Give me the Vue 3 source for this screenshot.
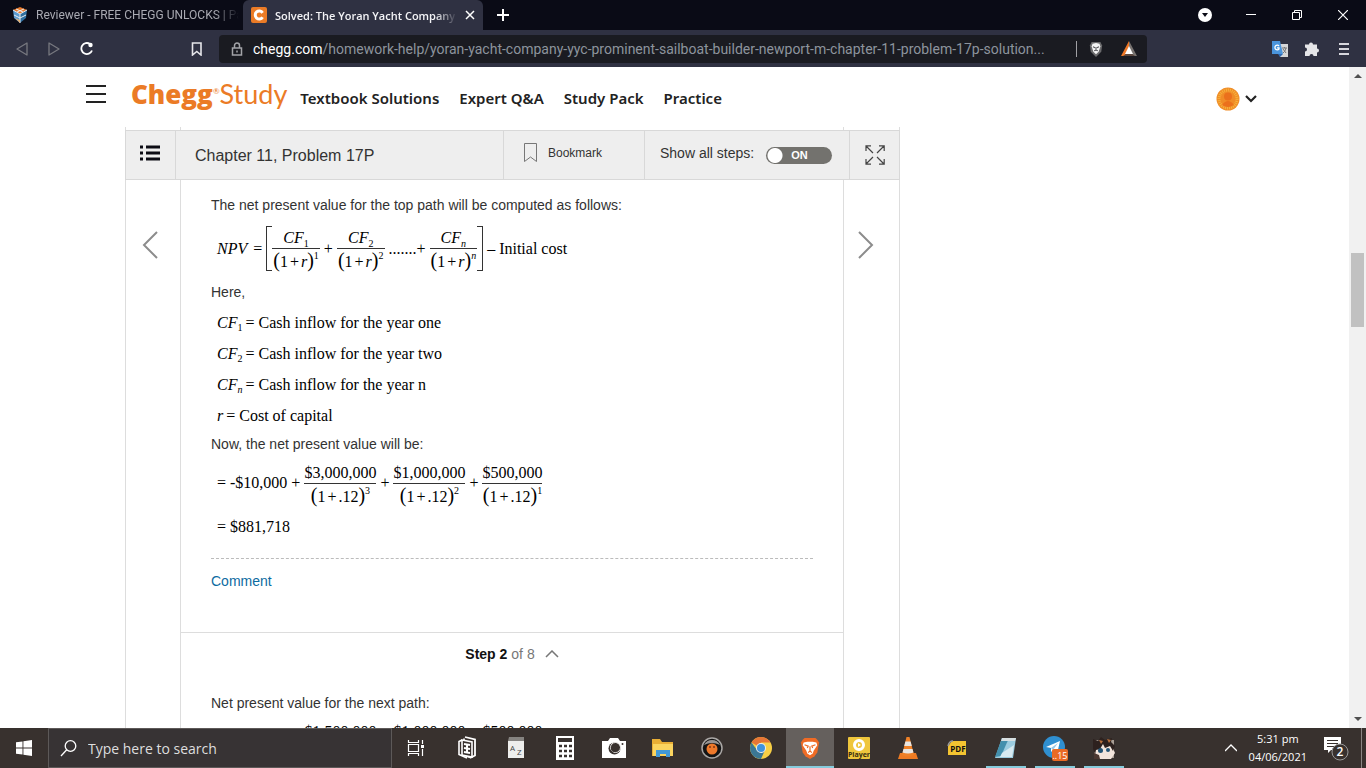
<template>
  <div class="screen">
    <header class="tabbar">
      <button class="tab">
        <svg class="tab-icon" width="16" height="16" viewBox="0 0 16 16">
          <path d="M8 0l7 3-7 4-7-4z" fill="#e8792b" />
          <path d="M1 3l7 4v9l-6-5z" fill="#5b9bd0" />
          <path d="M15 3L8 7v9l6-5z" fill="#2f6f9f" />
          <path d="M1 3l7 4 7-4M8 7v9M2 8l6 3 6-3M4 2l7 3M12 2L5 5" stroke="#e9eef2" fill="none" />
          <path d="M3 11l5 2v3z" fill="#e5b070" />
        </svg>
        <span class="tab-title">Reviewer - FREE CHEGG UNLOCKS | Pa</span>
      </button>
      <div class="tab active">
        <svg class="tab-icon" width="16" height="16" viewBox="0 0 16 16">
          <rect width="16" height="16" rx="2" fill="#eb7b26" />
          <path d="M11.600 5.800A4 4 0 1 0 11.600 10.200" stroke="#fff" stroke-width="3" fill="none" />
        </svg>
        <span class="tab-title">Solved: The Yoran Yacht Company</span>
        <button class="icon-btn" aria-label="Close tab">
          <svg width="10" height="10" viewBox="0 0 10 10"><path d="M1 1l8 8M9 1L1 9" stroke="#fff" stroke-width="1.500" /></svg>
        </button>
      </div>
      <button class="icon-btn new-tab" aria-label="New tab">
        <svg width="12" height="12" viewBox="0 0 12 12"><path d="M6 0v12M0 6h12" stroke="#fff" stroke-width="2" /></svg>
      </button>
      <div class="window-buttons">
        <button class="icon-btn" aria-label="Search tabs">
          <svg width="14" height="14" viewBox="0 0 14 14"><circle cx="7" cy="7" r="7" fill="#fff" /><path d="M4 5h6l-3 4z" fill="#0b0c17" /></svg>
        </button>
        <button class="icon-btn" aria-label="Minimize">
          <svg width="10" height="10" viewBox="0 0 10 10"><path d="M0 4.500h10" stroke="#fff" /></svg>
        </button>
        <button class="icon-btn" aria-label="Restore">
          <svg width="10" height="10" viewBox="0 0 10 10"><path d="M.5 2.500h7v7h-7zM2.500 2.500v-2h7v7h-2" stroke="#fff" fill="none" /></svg>
        </button>
        <button class="icon-btn" aria-label="Close">
          <svg width="10" height="10" viewBox="0 0 10 10"><path d="M0 0l10 10M10 0L0 10" stroke="#fff" stroke-width="1.200" /></svg>
        </button>
      </div>
    </header>

    <div class="toolbar">
      <div class="history">
        <button class="icon-btn" aria-label="Back">
          <svg width="12" height="14" viewBox="0 0 12 14"><path d="M11 1v12L1 7z" stroke="#77787f" stroke-width="1.300" fill="none" stroke-linejoin="round" /></svg>
        </button>
        <button class="icon-btn" aria-label="Forward">
          <svg width="12" height="14" viewBox="0 0 12 14"><path d="M1 1v12l10-6z" stroke="#77787f" stroke-width="1.300" fill="none" stroke-linejoin="round" /></svg>
        </button>
        <button class="icon-btn" aria-label="Reload">
          <svg width="16" height="16" viewBox="0 0 16 16"><path d="M10 3A5.500 5.500 0 1 0 12 9.500" stroke="#fff" stroke-width="1.800" fill="none" /><circle cx="10.500" cy="4" r="2.200" fill="#fff" /></svg>
        </button>
      </div>
      <button class="icon-btn" aria-label="Bookmark this page">
        <svg width="12" height="14" viewBox="0 0 12 14"><path d="M1.500 1h8.500v12L5.800 9.500 1.500 13z" stroke="#e6e6ea" stroke-width="1.600" fill="none" /></svg>
      </button>
      <div class="address">
        <svg width="12" height="14" viewBox="0 0 12 14"><path d="M1.500 6h9v7h-9zM3.500 6V3.500a2.500 2.500 0 0 1 5 0V6M6 8.500v2" stroke="#a3a4a8" stroke-width="1.500" fill="none" /></svg>
        <label for="url">chegg.com</label>
        <input id="url" v-model="url" />
        <span class="divider"></span>
        <button class="icon-btn shield" aria-label="Shields">
          <svg width="14" height="18" viewBox="0 0 16 18"><path d="M3 1h10l2 4-1 7-6 6-6-6-1-7z" fill="#6a6a6c" /><path d="M4 3l4-1 4 1 1 3-2 6-3 3-3-3-2-6z" fill="#f4f4f4" /><path d="M4.500 6.500L7 7.500M11.500 6.500L9 7.500M8 7v3M6 11l2-1 2 1" stroke="#55565a" stroke-width="1.300" fill="none" /></svg>
        </button>
        <button class="icon-btn" aria-label="Rewards">
          <svg width="16" height="16" viewBox="0 0 16 16"><path d="M8 0L0 15h4l4-9z" fill="#ee7725" /><path d="M8 0l8 15h-4L8 6z" fill="#77726f" /><path d="M8 5l-4 8h8z" fill="#fff" /><path d="M2 15l3-2h6l3 2z" fill="#5a463d" /></svg>
        </button>
      </div>
      <div class="extensions">
        <button class="icon-btn" aria-label="Translate">
          <svg width="16" height="16" viewBox="0 0 16 16"><path d="M6 3h10v13H8z" fill="#d5d6d8" /><path d="M0 0h8l3 13H0z" fill="#4a94dc" /><path d="M6 13h5l-3 3z" fill="#2d68b2" /><path d="M7 5a2.300 2.300 0 1 0 0 3V6.800H5" stroke="#fff" stroke-width="1.300" fill="none" /><path d="M10 7h5M12.500 6v1M14 7q-1 4-3 5M11 8l3 4" stroke="#777" fill="none" /></svg>
        </button>
        <button class="icon-btn" aria-label="Extensions">
          <svg width="16" height="16" viewBox="0 0 16 16"><path d="M1 3.500h4a2 2 0 1 1 4 0h4v4a2 2 0 1 1 0 4v3.500H9.500a2 2 0 0 0-4 0H1V10.500a2 2 0 0 0 0-4z" fill="#e5e5e8" /></svg>
        </button>
        <button class="icon-btn menu" aria-label="Menu">
          <svg width="10" height="14" viewBox="0 0 10 14"><path d="M0 2h10M0 7h10M0 12h10" stroke="#d6d6dc" stroke-width="2" /></svg>
        </button>
      </div>
    </div>

    <div class="viewport">
      <main class="page">
        <div class="site-header">
          <button class="icon-btn" aria-label="Open menu">
            <svg width="20" height="20" viewBox="0 0 20 20"><path d="M0 2h20M0 10h20M0 18h20" stroke="#222" stroke-width="2" /></svg>
          </button>
          <a class="logo" href="#"><b>Chegg</b><sup>®</sup><span>Study</span></a>
          <nav>
            <a v-for="item in nav" :key="item" href="#">{{ item }}</a>
          </nav>
          <button class="icon-btn account" aria-label="Account">
            <svg width="24" height="24" viewBox="0 0 24 24"><circle cx="12" cy="12" r="11.500" fill="#f08c27" /><circle cx="12" cy="12" r="9" fill="none" stroke="#f6b23c" stroke-width="3" stroke-dasharray="1 1" /><circle cx="12" cy="9.500" r="4" fill="#eb701c" /><path d="M6 18q6-8 12 0-6 4-12 0z" fill="#eb701c" /></svg>
            <svg width="12" height="8" viewBox="0 0 12 8"><path d="M1 1l5 5 5-5" stroke="#222" stroke-width="2.200" fill="none" /></svg>
          </button>
        </div>

        <section class="solution">
          <div class="rails"><span></span></div>
          <div class="problem-bar">
            <button class="icon-btn cell toc" aria-label="Table of contents">
              <svg width="20" height="16" viewBox="0 0 20 16"><path d="M0 2h3M6 2h14M0 8h3M6 8h14M0 14h3M6 14h14" stroke="#0c0c14" stroke-width="3" /></svg>
            </button>
            <h1 class="cell">Chapter 11, Problem 17P</h1>
            <button class="icon-btn cell bookmark">
              <svg width="14" height="20" viewBox="0 0 14 20"><path d="M.5.500h12v18l-6-4.500-6 4.500z" stroke="#777" fill="none" /></svg>
              Bookmark
            </button>
            <div class="cell steps">
              <label for="show-steps">Show all steps:</label>
              <span class="switch">
                <input id="show-steps" v-model="showSteps" type="checkbox" />
                <span class="switch-text">{{ showSteps ? 'ON' : 'OFF' }}</span>
              </span>
            </div>
            <button class="icon-btn cell expand" aria-label="Full screen">
              <svg width="20" height="20" viewBox="0 0 20 20"><path d="M8 8L1 1M1 6V.8h5M12 8l7-7M14 .8h5.200V6M8 12l-7 7M1 14v5.200h5M12 12l7 7M14 19.200h5.200V14" stroke="#444" stroke-width="1.200" fill="none" /></svg>
            </button>
          </div>

          <div class="solution-body">
            <button class="icon-btn arrow prev" aria-label="Previous problem">
              <svg width="16" height="28" viewBox="0 0 16 28"><path d="M15 1L2 14l13 13" stroke="#8c8c8c" stroke-width="2" fill="none" /></svg>
            </button>
            <article>
              <div class="step">
                <p>The net present value for the top path will be computed as follows:</p>
                <div class="math tall">
                  <i>NPV</i><span class="eq">=</span>
                  <span class="bracket">
                    <template v-for="(t, k) in terms" :key="k">
                      <span v-if="k" class="op">{{ t.op }}</span>
                      <span class="frac">
                        <span class="num"><i>CF</i><sub :class="{ var: t.exp === 'n' }">{{ t.exp }}</sub></span>
                        <span class="den"><span class="paren">(</span>1<span class="plus">+</span><i>r</i><span class="paren">)</span><sup :class="{ var: t.exp === 'n' }">{{ t.exp }}</sup></span>
                      </span>
                    </template>
                  </span>
                  <span class="minus">– Initial cost</span>
                </div>
                <p>Here,</p>
                <div class="defs">
                  <div v-for="d in defs" :key="d.text" class="math">
                    <i>{{ d.sym }}</i><sub v-if="d.sub" :class="{ var: d.sub === 'n' }">{{ d.sub }}</sub><span class="def">= {{ d.text }}</span>
                  </div>
                </div>
                <p>Now, the net present value will be:</p>
                <div class="math calc">
                  = -$10,000
                  <template v-for="f in topPath" :key="f.amount">
                    <span class="op">+</span>
                    <span class="frac">
                      <span class="num">{{ f.amount }}</span>
                      <span class="den"><span class="paren">(</span>1<span class="plus">+</span>.12<span class="paren">)</span><sup>{{ f.years }}</sup></span>
                    </span>
                  </template>
                </div>
                <div class="math">= $881,718</div>
                <div class="comment"><a href="#">Comment</a></div>
              </div>
              <div class="step">
                <h2><b>Step 2</b> of 8
                  <svg width="14" height="8" viewBox="0 0 14 8"><path d="M1 7l6-6 6 6" stroke="#777" stroke-width="1.500" fill="none" /></svg>
                </h2>
                <p>Net present value for the next path:</p>
                <div class="math calc">
                  = -$10,000
                  <template v-for="f in nextPath" :key="f.amount">
                    <span class="op">+</span>
                    <span class="frac">
                      <span class="num">{{ f.amount }}</span>
                      <span class="den"><span class="paren">(</span>1<span class="plus">+</span>.12<span class="paren">)</span><sup>{{ f.years }}</sup></span>
                    </span>
                  </template>
                </div>
              </div>
            </article>
            <button class="icon-btn arrow next" aria-label="Next problem">
              <svg width="16" height="28" viewBox="0 0 16 28"><path d="M1 1l13 13L1 27" stroke="#8c8c8c" stroke-width="2" fill="none" /></svg>
            </button>
          </div>
        </section>
      </main>
      <div class="scrollbar">
        <svg width="8" height="4" viewBox="0 0 8 4"><path d="M0 4l4-4 4 4z" fill="#505050" /></svg>
        <div class="track"><div class="thumb"></div></div>
        <svg width="8" height="4" viewBox="0 0 8 4"><path d="M0 0l4 4 4-4z" fill="#505050" /></svg>
      </div>
    </div>

    <footer class="taskbar">
      <button class="icon-btn start" aria-label="Start">
        <svg width="16" height="16" viewBox="0 0 16 16"><path d="M0 2.300L6.500 1.400v6.100H0zM7.400 1.200L16 0v7.500H7.400zM0 8.400h6.500v6.200L0 13.700zM7.400 8.400H16V16l-8.600-1.200z" fill="#fff" /></svg>
      </button>
      <div class="search">
        <label for="search" aria-label="Search">
          <svg width="17" height="17" viewBox="0 0 17 17"><circle cx="10.500" cy="6" r="5.300" stroke="#fff" stroke-width="1.300" fill="none" /><path d="M6.700 9.800L1 16" stroke="#fff" stroke-width="1.300" /></svg>
        </label>
        <input id="search" type="text" placeholder="Type here to search" />
      </div>
      <div class="apps">
        <button class="app" aria-label="Task View">
          <svg width="22" height="16" viewBox="0 0 22 16"><path d="M1.500 0v2.500h10V0M1.500 16v-2.500h10V16M1.500 4.500h10v7h-10zM15.500 0v4M15.500 9v7" stroke="#fff" stroke-width="1.200" fill="none" /><path d="M14 5h3v3h-3z" fill="#fff" /></svg>
        </button>
        <button class="app" aria-label="News">
          <svg width="18" height="24" viewBox="0 0 18 24"><path d="M4 4L1 5.500v13L9 22" stroke="#fff" stroke-width="1.600" fill="none" /><path d="M6 2.500v16.500l6 2.500" stroke="#fff" stroke-width="1.600" fill="none" /><path d="M7 1l10 2.500v16L12 22" stroke="#fff" stroke-width="1.800" fill="none" /><path d="M4 4l10 2v15L4 19z" stroke="#fff" stroke-width="1.600" fill="#38312e" /><path d="M6 8l6 1M6 12l6 1M6 16l6 1M9 8v9" stroke="#fff" stroke-width="2" /></svg>
        </button>
        <button class="app" aria-label="Dictionary">
          <svg width="18" height="22" viewBox="0 0 18 22"><path d="M2 0h15v4H1z" fill="#858380" /><path d="M1 4h16v17H1z" fill="#eeeeec" /><text x="3" y="14" class="az">A</text><text x="10" y="18" class="az">Z</text></svg>
        </button>
        <button class="app" aria-label="Calculator">
          <svg width="18" height="24" viewBox="0 0 18 24"><path d="M0 0h18v24H0z" fill="#fff" /><path d="M2 2h14v4H2z" fill="#38312e" /><path d="M3 10h13M3 15h13M3 20h13" stroke="#38312e" stroke-width="2.500" stroke-dasharray="3 2" /></svg>
        </button>
        <button class="app" aria-label="Camera">
          <svg width="24" height="20" viewBox="0 0 24 20"><path d="M0 3h6l2-3h8l2 3h6v17H0z" fill="#fff" /><circle cx="12.500" cy="10.500" r="6" fill="#38312e" /><circle cx="13.500" cy="9.500" r="5" fill="none" stroke="#e7e5e3" /><circle cx="12.500" cy="10.500" r="3.500" fill="#38312e" /><circle cx="20.500" cy="6" r="1" fill="#38312e" /></svg>
        </button>
        <button class="app" aria-label="File Explorer">
          <svg width="22" height="18" viewBox="0 0 22 18"><path d="M0 0h8l2 3h11v14H0z" fill="#e9ae35" /><path d="M1 5h20v12H1z" fill="#fbd45f" /><path d="M4 18v-7h14v7h-4v-3H8v3z" fill="#4299d6" /></svg>
        </button>
        <button class="app" aria-label="Recorder">
          <svg width="22" height="22" viewBox="0 0 22 22"><circle cx="11" cy="11" r="10" fill="#141414" stroke="#aaa7a5" stroke-width="1.500" /><path d="M3 8a9 9 0 0 1 16 0q-8-4-16 0z" fill="#979493" /><circle cx="11" cy="12" r="5.500" fill="#ee792b" /><circle cx="9" cy="10" r="1" fill="#843712" /><circle cx="13" cy="10" r="1" fill="#843712" /></svg>
        </button>
        <button class="app" aria-label="Chrome">
          <svg width="22" height="22" viewBox="0 0 22 22"><circle cx="11" cy="11" r="11" fill="#f8cf45" /><path d="M11 11L1.500 5.500A11 11 0 0 1 20.500 5.500H11z" fill="#e77636" /><path d="M1.500 5.500A11 11 0 0 0 11 22l4-9-4-2-4 2z" fill="#3b7794" /><circle cx="11" cy="11" r="5" fill="#eee" /><circle cx="11" cy="11" r="4" fill="#4093dd" /></svg>
        </button>
        <button class="app current" aria-label="Brave">
          <svg width="20" height="24" viewBox="0 0 22 24"><path d="M5 1h12l2 2 2 3-2 11-3 4-5 3-5-3-3-4L1 6l2-3z" fill="#ef6b25" /><path d="M4 6l4-1h6l4 1 1 3-4 6-1 3-3 2-3-2-1-3-4-6z" fill="#fff" /><path d="M5 8.500l4 1.500-1 2M17 8.500l-4 1.500 1 2M11 10v5M9 17l2-2 2 2" stroke="#ef6b25" stroke-width="1.300" fill="none" /></svg>
        </button>
        <button class="app" aria-label="Player">
          <svg width="22" height="22" viewBox="0 0 22 22"><rect width="22" height="22" rx="1" fill="#efc63c" /><circle cx="11" cy="8" r="4.500" fill="none" stroke="#fff" stroke-width="3" /><path d="M10 6l3 2-3 2z" fill="#fff" /><text x="11" y="20" class="player">Player</text></svg>
        </button>
        <button class="app" aria-label="VLC">
          <svg width="20" height="24" viewBox="0 0 20 24"><path d="M2 17h16l2 6H0z" fill="#ed7a22" /><path d="M8.500 1h3L16 19q-6 3-12 0z" fill="#ef8127" /><path d="M7.400 5.500h5.200l1.200 4.500H6.200zM5.500 13h9l1 3.500q-5.500 2-11 0z" fill="#e8e5e1" /></svg>
        </button>
        <button class="app" aria-label="PDF">
          <svg width="20" height="16" viewBox="0 0 20 16"><path d="M5 1h14v14H1V6z" fill="#f4c431" /><path d="M1 6Q2 1 6 1" stroke="#999" fill="none" stroke-width="1.500" /><text x="11" y="12" class="pdf">PDF</text></svg>
        </button>
        <button class="app running" aria-label="Notepad">
          <svg width="24" height="22" viewBox="0 0 24 22"><path d="M8 1h14l-3 20H1z" fill="#9cccdf" /><path d="M8 1h7L7 19l-6 1z" fill="#438fac" /><path d="M8 16L20 8l-2 12H6z" fill="#d8eaf0" /><path d="M8 1h14l-1 3H7z" fill="#d7dfe1" /></svg>
        </button>
        <button class="app running" aria-label="Telegram">
          <svg width="26" height="26" viewBox="0 0 26 26"><circle cx="12" cy="12" r="11" fill="#2f8fd0" /><path d="M4 12l14-6-3 13-4-4-2 2v-4z" fill="#fff" /><path d="M9 13l7-5-5 7z" fill="#9ac8e6" /><rect x="10" y="14" width="16" height="12" rx="2" fill="#e96a24" /><text x="18" y="24" class="badge">..15</text></svg>
        </button>
        <button class="app running" aria-label="Game">
          <svg width="24" height="24" viewBox="0 0 24 24"><path d="M2 4h20v18H2z" fill="#a99e95" /><path d="M3 11l7-4 10 3 3 7-4 6H4z" fill="#f2e5dc" /><path d="M1 3l5 2 3-4 4 3 7-2-1 4 4 4-2 5-3-5-5 2-2-4-3 5-4 1-1 4-2-5z" fill="#2d211e" /><path d="M7 4l4 1-2 3zM15 3l4 1-2 3z" fill="#b76f3c" /><circle cx="8.500" cy="14.500" r="2.500" fill="#245475" /><circle cx="16" cy="14" r="2" fill="#245475" /><path d="M2 17l5 2 1 4H2z" fill="#4b3832" /></svg>
        </button>
      </div>
      <div class="tray">
        <button class="icon-btn" aria-label="Show hidden icons">
          <svg width="12" height="8" viewBox="0 0 12 8"><path d="M0 7l6-6 6 6" stroke="#fff" stroke-width="1.300" fill="none" /></svg>
        </button>
        <div class="clock"><span>5:31 pm</span><span>04/06/2021</span></div>
        <button class="icon-btn" aria-label="Notifications">
          <svg width="26" height="26" viewBox="0 0 26 26"><path d="M1 2h17v13H8l-3 3v-3H1z" fill="#fff" /><path d="M4 5.500h11M4 8.500h11M4 11.500h7" stroke="#38312e" /><circle cx="17" cy="17" r="8" fill="#38312e" stroke="#999" /><text x="17" y="21" class="count">2</text></svg>
        </button>
        <span class="peek"></span>
      </div>
    </footer>
  </div>
</template>

<script setup>
import { ref } from 'vue';

const url = ref('/homework-help/yoran-yacht-company-yyc-prominent-sailboat-builder-newport-m-chapter-11-problem-17p-solution...');
const showSteps = ref(true);

const nav = ['Textbook Solutions', 'Expert Q&A', 'Study Pack', 'Practice'];

const terms = [
  { exp: '1' },
  { op: '+', exp: '2' },
  { op: '.......+', exp: 'n' }
];

const defs = [
  { sym: 'CF', sub: '1', text: 'Cash inflow for the year one' },
  { sym: 'CF', sub: '2', text: 'Cash inflow for the year two' },
  { sym: 'CF', sub: 'n', text: 'Cash inflow for the year n' },
  { sym: 'r', text: 'Cost of capital' }
];

const topPath = [
  { amount: '$3,000,000', years: 3 },
  { amount: '$1,000,000', years: 2 },
  { amount: '$500,000', years: 1 }
];

const nextPath = [
  { amount: '$1,500,000', years: 3 },
  { amount: '$1,000,000', years: 2 },
  { amount: '$500,000', years: 1 }
];
</script>

<style>
body {
  margin: 0;
}
</style>

<style scoped>
.screen {
  display: flex;
  flex-direction: column;
  height: 100vh;
  overflow: hidden;
  background: #fff;
  font-family: "Liberation Sans", Arial, sans-serif;
  font-size: 14px;
  color: #333;
}

button {
  border: 0;
  padding: 0;
  background: none;
  font-family: inherit;
  color: inherit;
}

svg {
  display: block;
  flex: none;
}

a {
  text-decoration: none;
}

.icon-btn {
  display: flex;
  align-items: center;
  justify-content: center;
}

/* browser chrome */
.tabbar {
  display: flex;
  align-items: center;
  height: 30px;
  background: #0a0b16;
}

.tab {
  display: flex;
  align-items: center;
  gap: 8px;
  width: 243px;
  height: 30px;
  padding: 0 4px 0 12px;
  box-sizing: border-box;
  font-family: Roboto, sans-serif;
  font-size: 12px;
  color: #a9aab2;
}

.tab.active {
  width: 240px;
  padding: 0 8px;
  border-radius: 6px 6px 0 0;
  background: #2f3142;
  font-family: "Open Sans", sans-serif;
  font-size: 11px;
  font-weight: 600;
  color: #f3f3f6;
}

.tab-title {
  flex: 1;
  overflow: hidden;
  white-space: nowrap;
  text-align: left;
  mask-image: linear-gradient(to right, #000 88%, transparent);
}

.new-tab {
  width: 40px;
  height: 30px;
}

.window-buttons {
  display: flex;
  margin-left: auto;
}

.window-buttons .icon-btn {
  width: 46px;
  height: 28px;
}

.toolbar {
  display: flex;
  align-items: center;
  height: 37px;
  background: #2f3142;
}

.history {
  display: flex;
  gap: 20px;
  width: 191px;
  padding-left: 16px;
  box-sizing: border-box;
}

.address {
  display: flex;
  flex: 1;
  align-items: center;
  height: 28px;
  margin-left: 16px;
  padding: 0 10px 0 12px;
  border-radius: 4px;
  background: #1a1b21;
  font-family: Roboto, sans-serif;
  font-size: 14px;
  color: #fff;
}

.address label {
  margin-left: 10px;
}

.address input {
  flex: 1;
  min-width: 0;
  border: 0;
  padding: 0;
  background: none;
  font: inherit;
  color: #8d949d;
  outline: none;
}

.divider {
  width: 1px;
  height: 16px;
  background: #a0a0a4;
}

.shield {
  margin: 0 18px 0 12px;
}

.extensions {
  display: flex;
  gap: 16px;
  padding: 0 17px 0 125px;
}

.menu {
  margin-left: 3px;
}

/* site */
.viewport {
  display: flex;
  flex: 1;
  min-height: 0;
}

.page {
  flex: 1;
  min-width: 0;
  overflow: hidden;
}

.site-header {
  display: flex;
  align-items: center;
  height: 54px;
  padding: 0 92px 0 86px;
}

.logo {
  margin-left: 25px;
  font-family: Lato, sans-serif;
  font-size: 27px;
  line-height: 32px;
  color: #eb7b26;
}

.logo b {
  font-family: "Open Sans", sans-serif;
  font-size: 26px;
  font-weight: 800;
}

.logo sup {
  font-size: 8px;
  line-height: 8px;
  vertical-align: 10px;
}

nav {
  display: flex;
  gap: 20px;
  margin-left: 13px;
  padding-top: 7px;
}

nav a {
  font-family: "Noto Sans", sans-serif;
  font-size: 15px;
  font-weight: 600;
  color: #222;
}

.account {
  gap: 5px;
  margin-left: auto;
  padding-top: 10px;
}

.solution {
  width: 775px;
  margin: 6px 0 0 125px;
}

.rails {
  height: 3px;
  padding: 0 55px 0 54px;
  border: 1px solid #ddd;
  border-width: 0 1px;
}

.rails span {
  display: block;
  height: 3px;
  border: 1px solid #ddd;
  border-width: 0 1px;
}

.problem-bar {
  display: flex;
  height: 50px;
  box-sizing: border-box;
  border: 1px solid #d8d8d8;
  background: #eee;
}

.cell + .cell {
  border-left: 1px solid #d8d8d8;
}

.toc {
  width: 49px;
  padding: 0 2px 4px 0;
}

.expand {
  width: 50px;
}

h1 {
  flex: 1;
  margin: 0;
  padding-left: 19px;
  font-size: 16px;
  font-weight: 400;
  line-height: 50px;
}

.bookmark {
  justify-content: flex-start;
  gap: 10px;
  width: 141px;
  padding: 0 0 4px 20px;
  font-size: 12px;
}

.steps {
  display: flex;
  align-items: center;
  gap: 12px;
  width: 205px;
  padding-left: 15px;
  box-sizing: border-box;
}

.steps label {
  padding-bottom: 4px;
}

.switch {
  display: flex;
  position: relative;
}

.switch input {
  appearance: none;
  width: 66px;
  height: 17px;
  margin: 0;
  border-radius: 9px;
  background: radial-gradient(circle at 9px 50%, #fff 7px, #73726e 8px);
}

.switch-text {
  position: absolute;
  left: 25px;
  top: 2px;
  font-size: 11px;
  font-weight: 700;
  line-height: 13px;
  color: #fff;
  pointer-events: none;
}

.solution-body {
  display: flex;
  align-items: flex-start;
  border: 1px solid #ddd;
  border-top: 0;
}

.arrow {
  box-sizing: border-box;
  padding-top: 51px;
}

.prev {
  width: 54px;
  padding-right: 6px;
}

.next {
  width: 55px;
  padding-right: 12px;
}

article {
  flex: 1;
  border: 1px solid #ddd;
  border-width: 0 1px;
}

.step {
  padding: 14px 30px 40px;
}

.step + .step {
  padding-top: 0;
  border-top: 1px solid #ddd;
}

p {
  margin: 0;
  line-height: 22px;
}

h2 {
  display: flex;
  align-items: center;
  justify-content: center;
  gap: 4px;
  height: 42px;
  margin: 0 0 17px;
  font-size: 14px;
  font-weight: 400;
  color: #777;
}

h2 b {
  color: #111;
}

h2 svg {
  margin-left: 6px;
}

.math {
  display: flex;
  align-items: center;
  height: 31px;
  padding-left: 6px;
  font-family: "Liberation Serif", "Times New Roman", serif;
  font-size: 16px;
  color: #000;
  white-space: nowrap;
}

.math.tall {
  height: 65px;
}

.math.calc {
  height: 56px;
}

.defs {
  margin: 4px 0 2px;
}

.eq {
  margin: 0 4px 0 6px;
}

.def {
  margin-left: 3px;
}

.math sub,
.math sup {
  font-size: 10px;
  line-height: 10px;
}

.var {
  font-style: italic;
}

.defs sub {
  padding-top: 10px;
}

.bracket {
  display: flex;
  align-items: center;
  position: relative;
  padding: 0 6px;
}

.bracket::before,
.bracket::after {
  content: '';
  position: absolute;
  top: 0;
  bottom: 0;
  width: 5px;
  border: 1px solid #333;
}

.bracket::before {
  left: 0;
  border-right: 0;
}

.bracket::after {
  right: 0;
  border-left: 0;
}

.op {
  margin: 0 4px;
}

.plus {
  margin: 0 2px;
}

.frac {
  display: flex;
  flex-direction: column;
  align-items: center;
}

.bracket .den {
  padding: 0 1px;
}

.num,
.den {
  height: 22px;
  line-height: 22px;
}

.num {
  align-self: stretch;
  border-bottom: 1px solid #333;
  line-height: 24px;
  text-align: center;
}

.paren {
  font-size: 20px;
}

.den sup {
  vertical-align: 8px;
}

.minus {
  margin-left: 4px;
}

.comment {
  margin-top: 16px;
  padding-top: 11px;
  border-top: 1px dashed #bbb;
  line-height: 22px;
}

.comment a {
  color: #0d6ba1;
}

.scrollbar {
  display: flex;
  flex-direction: column;
  align-items: center;
  width: 17px;
  padding: 7px 0;
  box-sizing: border-box;
  background: #f1f1f1;
}

.track {
  display: flex;
  flex: 1;
  padding-top: 175px;
}

.thumb {
  width: 13px;
  height: 74px;
  background: #c1c1c1;
}

/* taskbar */
.taskbar {
  display: flex;
  height: 40px;
  background: #38312e;
  font-family: "Open Sans", sans-serif;
  color: #fff;
}

.start {
  width: 48px;
}

.search {
  display: flex;
  align-items: center;
  gap: 11px;
  width: 344px;
  padding: 0 11px;
  box-sizing: border-box;
  border: 1px solid #5d5958;
  background: #373334;
}

.search input {
  flex: 1;
  min-width: 0;
  border: 0;
  padding: 0;
  background: none;
  font: inherit;
  font-size: 14px;
  color: #fff;
  outline: none;
}

.search input::placeholder {
  color: #dededf;
}

.apps {
  display: flex;
  gap: 1px;
  padding-left: 2px;
}

.app {
  display: flex;
  position: relative;
  align-items: center;
  justify-content: center;
  width: 48px;
}

.app.current {
  background: #65605d;
}

.app.current::after,
.app.running::after {
  content: '';
  position: absolute;
  bottom: 0;
  left: 4px;
  right: 4px;
  height: 2px;
  background: #85cbdc;
}

.app.current::after {
  left: 0;
  right: 0;
}

.az {
  font-size: 8px;
  fill: #444;
}

.player,
.pdf,
.badge,
.count {
  text-anchor: middle;
  font-size: 7px;
  font-weight: 700;
  fill: #3a2f10;
}

.pdf {
  font-size: 8px;
  fill: #111;
}

.badge {
  font-size: 9px;
  font-weight: 400;
  fill: #fff;
}

.count {
  font-size: 12px;
  font-weight: 600;
  fill: #fff;
}

.tray {
  display: flex;
  align-items: center;
  gap: 12px;
  margin-left: auto;
  padding-right: 4px;
}

.clock {
  display: flex;
  flex-direction: column;
  align-items: center;
  margin-right: 4px;
  font-size: 11px;
  line-height: 18px;
}

.peek {
  width: 1px;
  height: 40px;
  background: #8a8684;
}
</style>
